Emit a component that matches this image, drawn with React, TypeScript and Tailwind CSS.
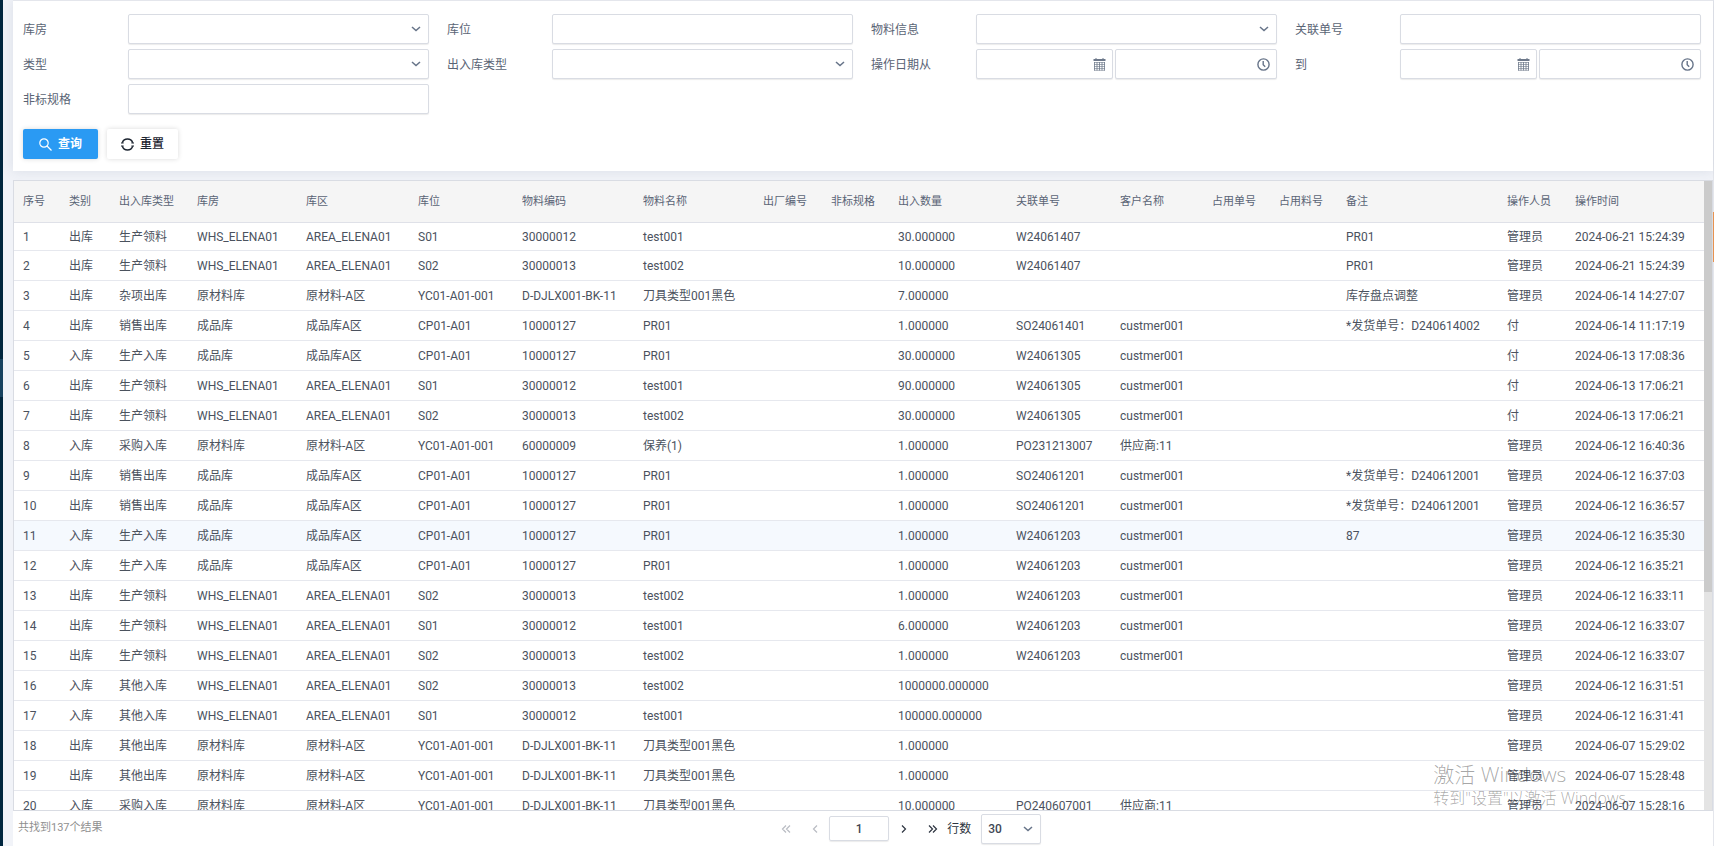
import { useState } from "react";
import type { ReactNode } from "react";

const columns = [
  { label: "序号", width: "w-[46px]" },
  { label: "类别", width: "w-[50px]" },
  { label: "出入库类型", width: "w-[78px]" },
  { label: "库房", width: "w-[109px]" },
  { label: "库区", width: "w-[112px]" },
  { label: "库位", width: "w-[104px]" },
  { label: "物料编码", width: "w-[121px]" },
  { label: "物料名称", width: "w-[120px]" },
  { label: "出厂编号", width: "w-[68px]" },
  { label: "非标规格", width: "w-[67px]" },
  { label: "出入数量", width: "w-[118px]" },
  { label: "关联单号", width: "w-[104px]" },
  { label: "客户名称", width: "w-[92px]" },
  { label: "占用单号", width: "w-[67px]" },
  { label: "占用料号", width: "w-[67px]" },
  { label: "备注", width: "w-[161px]" },
  { label: "操作人员", width: "w-[68px]" },
  { label: "操作时间", width: "w-[138px]" },
];

const ELENA = ["WHS_ELENA01", "AREA_ELENA01"];
const RAW = ["原材料库", "原材料-A区", "YC01-A01-001"];
const S01 = [...ELENA, "S01", "30000012", "test001"];
const S02 = [...ELENA, "S02", "30000013", "test002"];
const KNIFE = [...RAW, "D-DJLX001-BK-11", "刀具类型001黑色"];
const PR = ["成品库", "成品库A区", "CP01-A01", "10000127", "PR01"];

// [类别, 出入库类型, 物料, 出入数量, 关联单号, 客户名称, 备注, 操作人员, 操作时间]
type RecordRow = [string, string, string[], string, string, string, string, string, string];

const records: RecordRow[] = [
  ["出库", "生产领料", S01, "30.000000", "W24061407", "", "PR01", "管理员", "2024-06-21 15:24:39"],
  ["出库", "生产领料", S02, "10.000000", "W24061407", "", "PR01", "管理员", "2024-06-21 15:24:39"],
  ["出库", "杂项出库", KNIFE, "7.000000", "", "", "库存盘点调整", "管理员", "2024-06-14 14:27:07"],
  ["出库", "销售出库", PR, "1.000000", "SO24061401", "custmer001", "*发货单号：D240614002", "付", "2024-06-14 11:17:19"],
  ["入库", "生产入库", PR, "30.000000", "W24061305", "custmer001", "", "付", "2024-06-13 17:08:36"],
  ["出库", "生产领料", S01, "90.000000", "W24061305", "custmer001", "", "付", "2024-06-13 17:06:21"],
  ["出库", "生产领料", S02, "30.000000", "W24061305", "custmer001", "", "付", "2024-06-13 17:06:21"],
  ["入库", "采购入库", [...RAW, "60000009", "保养(1)"], "1.000000", "PO231213007", "供应商:11", "", "管理员", "2024-06-12 16:40:36"],
  ["出库", "销售出库", PR, "1.000000", "SO24061201", "custmer001", "*发货单号：D240612001", "管理员", "2024-06-12 16:37:03"],
  ["出库", "销售出库", PR, "1.000000", "SO24061201", "custmer001", "*发货单号：D240612001", "管理员", "2024-06-12 16:36:57"],
  ["入库", "生产入库", PR, "1.000000", "W24061203", "custmer001", "87", "管理员", "2024-06-12 16:35:30"],
  ["入库", "生产入库", PR, "1.000000", "W24061203", "custmer001", "", "管理员", "2024-06-12 16:35:21"],
  ["出库", "生产领料", S02, "1.000000", "W24061203", "custmer001", "", "管理员", "2024-06-12 16:33:11"],
  ["出库", "生产领料", S01, "6.000000", "W24061203", "custmer001", "", "管理员", "2024-06-12 16:33:07"],
  ["出库", "生产领料", S02, "1.000000", "W24061203", "custmer001", "", "管理员", "2024-06-12 16:33:07"],
  ["入库", "其他入库", S02, "1000000.000000", "", "", "", "管理员", "2024-06-12 16:31:51"],
  ["入库", "其他入库", S01, "100000.000000", "", "", "", "管理员", "2024-06-12 16:31:41"],
  ["出库", "其他出库", KNIFE, "1.000000", "", "", "", "管理员", "2024-06-07 15:29:02"],
  ["出库", "其他出库", KNIFE, "1.000000", "", "", "", "管理员", "2024-06-07 15:28:48"],
  ["入库", "采购入库", KNIFE, "10.000000", "PO240607001", "供应商:11", "", "管理员", "2024-06-07 15:28:16"],
];

const toCells = (r: RecordRow, i: number) => [
  String(i + 1), r[0], r[1], ...r[2], "", "", r[3], r[4], r[5], "", "", r[6], r[7], r[8],
];

const box =
  "h-[30px] w-full min-w-0 rounded-xs border border-[#d9dce3] bg-white px-[6px] text-xs text-[#3f4754] shadow-[0_1px_1px_rgba(0,0,0,0.08)] outline-none focus:border-[#2a9af3]";

function Chevron() {
  return (
    <svg viewBox="0 0 10 6" className="h-[6px] w-[10px]" fill="none" stroke="#677489" strokeWidth="1.5">
      <path d="M1 1l4 3.6L9 1" />
    </svg>
  );
}

function CalendarIcon() {
  return (
    <svg viewBox="0 0 13 13" className="size-[13px]" fill="none" stroke="#6d788a">
      <path d="M0.5 1.5h12M0.5 2.5h12" />
      <path d="M3 0v2M10 0v2" />
      <path d="M1.5 4v8.5M4 4v8.5M6.5 4v8.5M9 4v8.5M11.5 4v8.5" strokeWidth="0.8" />
      <path d="M1 4.5h11M1 6.5h11M1 8.5h11M1 10.5h11M1 12.3h11" strokeWidth="0.6" />
    </svg>
  );
}

function ClockIcon() {
  return (
    <svg viewBox="0 0 13 13" className="size-[13px]" fill="none" stroke="#677489" strokeWidth="1.4">
      <circle cx="6.5" cy="6.5" r="5.6" />
      <path d="M6.2 3v3.8l2 2" />
    </svg>
  );
}

function Arrows({ count, flip }: { count: number; flip?: boolean }) {
  return (
    <svg
      viewBox="0 0 10 8"
      className={`h-2 w-[10px] ${flip ? "-scale-x-100" : ""}`}
      fill="none"
      stroke="currentColor"
      strokeWidth="1.2"
    >
      {count === 2 ? <path d="M1 0.5L4.5 4L1 7.5M5 0.5L8.5 4L5 7.5" /> : <path d="M3 0.5L6.5 4L3 7.5" />}
    </svg>
  );
}

function Field({ id, label, children }: { id: string; label: string; children: ReactNode }) {
  return (
    <div className="flex items-center">
      <label htmlFor={id} className="w-[105px] shrink-0 pt-[2px] text-xs text-[#5a6475]">
        {label}
      </label>
      <div className="min-w-0 flex-1">{children}</div>
    </div>
  );
}

function TextField({ id, label }: { id: string; label: string }) {
  return (
    <Field id={id} label={label}>
      <input id={id} type="text" className={`${box} block`} />
    </Field>
  );
}

function SelectField({ id, label }: { id: string; label: string }) {
  return (
    <Field id={id} label={label}>
      <div className="relative">
        <select id={id} className={`${box} block appearance-none`}>
          <option value=""></option>
        </select>
        <span className="pointer-events-none absolute inset-y-0 right-2 flex items-center">
          <Chevron />
        </span>
      </div>
    </Field>
  );
}

function DateTimeField({ id, label }: { id: string; label: string }) {
  return (
    <Field id={id} label={label}>
      <div className="flex gap-[2px]">
        <div className="relative w-[137px] shrink-0">
          <input id={id} type="text" className={`${box} block`} />
          <span className="pointer-events-none absolute inset-y-0 right-[7px] flex items-center">
            <CalendarIcon />
          </span>
        </div>
        <div className="relative flex-1">
          <input type="text" aria-label={`${label} 时间`} className={`${box} block`} />
          <span className="pointer-events-none absolute inset-y-0 right-[7px] flex items-center">
            <ClockIcon />
          </span>
        </div>
      </div>
    </Field>
  );
}

export default function App() {
  const [page, setPage] = useState("1");
  const [active, setActive] = useState(10);

  return (
    <div className="relative flex h-screen overflow-hidden bg-[#f1f3f8] font-[Roboto,'Noto_Sans_CJK_SC',sans-serif] text-xs">
      {/* 侧边栏边缘 */}
      <div className="w-[3px] shrink-0 bg-[#00263e] pt-[359px]">
        <div className="h-[38px] bg-[#17425f]" />
      </div>

      <div className="ml-[10px] flex min-w-0 flex-1 flex-col border-r border-[#e4e6ec]">
        {/* 查询条件 */}
        <form
          onSubmit={(e) => e.preventDefault()}
          className="mb-[9px] border-t border-[#e4e6ec] bg-white pt-[13px] pr-3 pb-3 pl-[10px] shadow-[0_0_12px_rgba(60,70,110,0.12)]"
        >
          <div className="grid grid-cols-4 gap-x-[18px] gap-y-[5px]">
            <SelectField id="warehouse" label="库房" />
            <TextField id="location" label="库位" />
            <SelectField id="material" label="物料信息" />
            <TextField id="order" label="关联单号" />
            <SelectField id="kind" label="类型" />
            <SelectField id="inoutType" label="出入库类型" />
            <DateTimeField id="from" label="操作日期从" />
            <DateTimeField id="to" label="到" />
            <TextField id="spec" label="非标规格" />
          </div>

          <div className="mt-[15px] flex gap-[9px]">
            <button
              type="submit"
              className="flex h-[30px] w-[75px] items-center justify-center gap-[6px] rounded-xs bg-[#2a9af3] font-bold text-white shadow-[0_0_5px_rgba(0,0,0,0.15)]"
            >
              <svg viewBox="0 0 13 13" className="size-[13px]" fill="none" stroke="currentColor" strokeWidth="1.2">
                <circle cx="5" cy="5" r="4.2" />
                <path d="M8 8l4.5 4.5" />
              </svg>
              查询
            </button>
            <button
              type="reset"
              className="flex h-[30px] w-[71px] items-center justify-center gap-[6px] rounded-xs bg-white font-medium text-[#1c2430] shadow-[0_0_5px_rgba(0,0,0,0.15)]"
            >
              <svg viewBox="0 0 13 13" className="size-[13px]" fill="none" stroke="currentColor" strokeWidth="1.5">
                <path d="M1.3 4.8A5.5 5.5 0 0 1 11.7 4.8M11.7 8.2A5.5 5.5 0 0 1 1.3 8.2" />
                <path d="M0 5h2.6M10.4 5H13M0 8h2.6M10.4 8H13" strokeWidth="1.2" />
              </svg>
              重置
            </button>
          </div>
        </form>

        {/* 出入库记录 */}
        <div className="flex min-h-0 flex-1 border border-[#d9dce3] bg-white">
          <div className="min-w-0 flex-1 overflow-hidden">
            <table className="w-full table-fixed border-separate border-spacing-0 text-left whitespace-nowrap text-[#4b525e]">
              <thead>
                <tr className="h-[42px] bg-[#f5f5f5]">
                  {columns.map((c) => (
                    <th
                      key={c.label}
                      className={`${c.width} border-b border-[#dfe1e8] p-0 pt-[2px] pl-[9px] text-[11px] font-normal text-[#5a6475]`}
                    >
                      {c.label}
                    </th>
                  ))}
                </tr>
              </thead>
              <tbody>
                {records.map((r, i) => (
                  <tr
                    key={i}
                    onClick={() => setActive(i)}
                    className={`h-[30px] first:h-7 ${i === active ? "bg-[#f5f9fe]" : "bg-white"}`}
                  >
                    {toCells(r, i).map((cell, j) => (
                      <td key={j} className="border-b border-[#e6e8ee] p-0 pl-[9px]">
                        {cell}
                      </td>
                    ))}
                  </tr>
                ))}
              </tbody>
            </table>
          </div>
          <div className="w-2 shrink-0 bg-[#e4e4e4]">
            <div className="h-[65.4%] bg-[#cbcbcb]" />
          </div>
        </div>

        <footer className="flex h-[35px] shrink-0 items-center bg-white">
          <p className="w-[44.6%] pl-[5px] text-[11px] text-[#8f8f8f]">共找到137个结果</p>
          <div className="flex items-center">
            <button type="button" disabled aria-label="首页" className="flex w-[29px] justify-center text-[#b9bcc3]">
              <Arrows count={2} flip />
            </button>
            <button type="button" disabled aria-label="上一页" className="flex w-[29px] justify-center text-[#b9bcc3]">
              <Arrows count={1} flip />
            </button>
            <input
              aria-label="页码"
              value={page}
              onChange={(e) => setPage(e.target.value)}
              className="h-[25px] w-[60px] rounded-xs border border-[#d9dce3] text-center font-medium text-[#3f4754] shadow-[0_1px_1px_rgba(0,0,0,0.08)] outline-none"
            />
            <button type="button" aria-label="下一页" className="flex w-[29px] justify-center text-[#2d3440]">
              <Arrows count={1} />
            </button>
            <button type="button" aria-label="末页" className="flex w-[29px] justify-center text-[#2d3440]">
              <Arrows count={2} />
            </button>
            <label htmlFor="rows" className="mr-[10px] text-[#2d3440]">
              行数
            </label>
            <div className="relative w-[60px]">
              <select
                id="rows"
                defaultValue="30"
                className={`${box} block appearance-none font-medium`}
              >
                <option>10</option>
                <option>30</option>
                <option>50</option>
              </select>
              <span className="pointer-events-none absolute inset-y-0 right-2 flex items-center">
                <Chevron />
              </span>
            </div>
          </div>
        </footer>
      </div>

      {/* 右侧悬浮标签 */}
      <div className="absolute top-[212px] right-0 h-[50px] w-px bg-[#e8924f]" />

      <div className="pointer-events-none absolute right-[72px] bottom-[38px] font-['Open_Sans','Noto_Sans_CJK_SC',sans-serif] font-light text-black/35">
        <p className="text-[21px] leading-7">激活 Windows</p>
        <p className="text-base leading-5">转到"设置"以激活 Windows。</p>
      </div>
    </div>
  );
}
